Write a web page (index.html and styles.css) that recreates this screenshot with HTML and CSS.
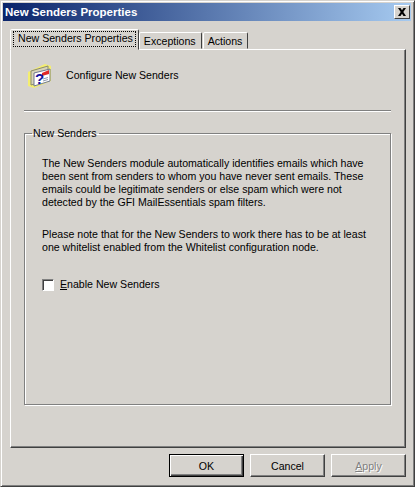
FILE: index.html
```html
<!DOCTYPE html>
<html lang="en">
<head>
<meta charset="utf-8">
<title>New Senders Properties</title>
<link rel="stylesheet" href="styles.css">
</head>
<body>
<div class="window">
  <div class="titlebar">
    <span class="title">New Senders Properties</span>
    <button class="close" aria-label="Close">
      <svg width="10" height="8" viewBox="0 0 10 8"><path d="M1 0h2.500L5 2.200 6.500 0H9L6.300 4 9 8H6.500L5 5.800 3.500 8H1l2.700-4z" fill="#000"/></svg>
    </button>
  </div>
  <div class="tabs">
    <div class="tab active"><span class="focus">New Senders Properties</span></div>
    <div class="tab">Exceptions</div>
    <div class="tab">Actions</div>
  </div>
  <div class="panel">
    <div class="header">
      <svg class="icon" width="26" height="26" viewBox="0 0 26 26">
        <path d="M1 9 18 1l6 2v15L7 25l-6-2z" fill="#f4ee70"/>
        <path d="M4 8 21 3v14L4 22z" fill="#d8d4b8" stroke="#8a8a70"/>
        <path d="M7 10 23 6v12L7 23z" fill="#fff" stroke="#707890"/>
        <path d="M15 10l7-3v4l-7 2z" fill="#e02828"/>
        <path d="M16 16l5-1.500M16 18l5-1.500" stroke="#9098b0"/>
        <text x="8" y="21" class="icon-q">?</text>
      </svg>
      <span>Configure New Senders</span>
    </div>
    <div class="separator"></div>
    <fieldset class="group">
      <legend>New Senders</legend>
      <p>The New Senders module automatically identifies emails which have<br>been sent from senders to whom you have never sent emails. These<br>emails could be legitimate senders or else spam which were not<br>detected by the GFI MailEssentials spam filters.</p>
      <p>Please note that for the New Senders to work there has to be at least<br>one whitelist enabled from the Whitelist configuration node.</p>
      <label class="check"><span class="box"></span><span><u>E</u>nable New Senders</span></label>
    </fieldset>
  </div>
  <div class="footer">
    <button class="btn default">OK</button>
    <button class="btn">Cancel</button>
    <button class="btn disabled"><u>A</u>pply</button>
  </div>
</div>
</body>
</html>
```
FILE: styles.css
```css
* { box-sizing: border-box; }
html, body { margin: 0; padding: 0; }
body {
  width: 415px;
  height: 487px;
  overflow: hidden;
  background: #d6d3ce;
  font: 10.600px/13px "Liberation Sans", Arial, sans-serif;
  color: #000;
}
.window {
  width: 415px;
  height: 487px;
  background: #d6d3ce;
  border: 1px solid;
  border-color: #d6d3ce #404040 #404040 #d6d3ce;
  box-shadow: inset 1px 1px 0 #fff, inset -1px -1px 0 #808080;
  padding: 2px 3px 0 2px;
  display: flex;
  flex-direction: column;
}
.titlebar {
  height: 18px;
  flex: none;
  background: linear-gradient(90deg, #0a246a, #a6caf0);
  color: #fff;
  font-weight: bold;
  font-size: 11.500px;
  display: flex;
  align-items: center;
  justify-content: space-between;
  padding: 0 1px 0 2px;
}
.close {
  width: 16px;
  height: 14px;
  padding: 0;
  background: #d6d3ce;
  border: 1px solid;
  border-color: #fff #404040 #404040 #fff;
  display: flex;
  align-items: center;
  justify-content: center;
}
.tabs {
  display: flex;
  align-items: flex-end;
  height: 28px;
  flex: none;
  padding-left: 7px;
  position: relative;
  z-index: 1;
}
.tab {
  height: 17px;
  padding: 2px 5px 0 4px;
  background: #d6d3ce;
  border: 1px solid;
  border-color: #fff #404040 transparent #fff;
  border-radius: 2px 2px 0 0;
  margin-left: 1px;
}
.tab.active {
  height: 21px;
  padding: 1px 2px 0;
  margin-bottom: -1px;
  margin-left: 0;
  margin-right: -1px;
}
.focus {
  display: block;
  padding: 0 3px 0 5px;
  outline: 1px dotted #000;
  outline-offset: -1px;
  height: 16px;
  line-height: 15px;
}
.panel {
  width: 396px;
  height: 399px;
  flex: none;
  margin-left: 7px;
  border: 1px solid;
  border-color: #fff #404040 #404040 #fff;
  box-shadow: inset -1px -1px 0 #808080;
  padding: 0 14px 0 13px;
  display: flex;
  flex-direction: column;
}
.header {
  display: flex;
  align-items: center;
  gap: 13px;
  height: 60px;
  padding: 0 0 9px 3px;
  flex: none;
}
.icon { flex: none; }
.icon-q { font: bold 15px "Liberation Sans", sans-serif; fill: #1010a0; }
.separator {
  height: 2px;
  flex: none;
  background: #808080;
  border-bottom: 1px solid #fff;
}
.group {
  margin: 15px 0 0;
  padding: 17px 18px 0 17px;
  height: 278px;
  flex: none;
  border: 1px solid #808080;
  box-shadow: 1px 1px 0 #fff, inset 1px 1px 0 #fff;
  min-width: 0;
}
.group legend {
  padding: 0 2px 0 1px;
  margin-left: -10px;
}
.group p { margin: 0 0 19px; white-space: nowrap; }
.check {
  display: flex;
  align-items: center;
  gap: 6px;
  margin-top: 24px;
}
.box {
  width: 12px;
  height: 12px;
  background: #fff;
  border: 1px solid;
  border-color: #808080 #fff #fff #808080;
  box-shadow: inset 1px 1px 0 #404040;
  outline: 1px solid #d6d3ce;
}
.footer {
  display: flex;
  justify-content: flex-end;
  gap: 6px;
  padding-top: 6px;
  padding-right: 5px;
}
.btn {
  width: 75px;
  height: 23px;
  padding: 0;
  background: #d6d3ce;
  border: 1px solid;
  border-color: #fff #404040 #404040 #fff;
  box-shadow: inset -1px -1px 0 #808080;
  font: 10.600px "Liberation Sans", Arial, sans-serif;
  color: #000;
}
.btn.default {
  border: 1px solid #000;
  box-shadow: inset 1px 1px 0 #fff, inset -1px -1px 0 #404040, inset -2px -2px 0 #808080;
}
.btn.disabled { color: #808080; text-shadow: 1px 1px 0 #fff; }
```
